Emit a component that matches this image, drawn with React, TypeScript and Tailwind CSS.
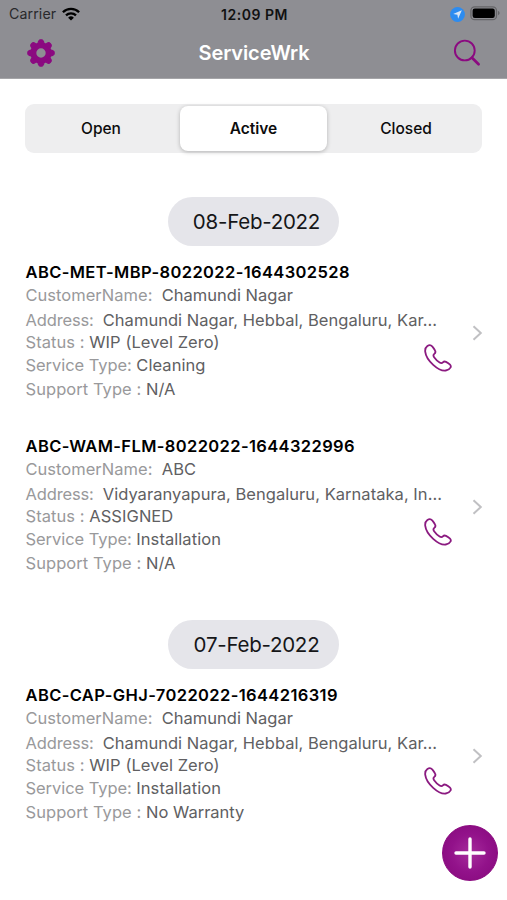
import { useState } from "react";

interface Ticket {
  id: string;
  customer: string;
  address: string;
  status: string;
  serviceType: string;
  supportType: string;
}

const TABS = ["Open", "Active", "Closed"];

const GROUPS: { date: string; tickets: Ticket[] }[] = [
  {
    date: "08-Feb-2022",
    tickets: [
      {
        id: "ABC-MET-MBP-8022022-1644302528",
        customer: "Chamundi Nagar",
        address: "Chamundi Nagar, Hebbal, Bengaluru, Kar...",
        status: "WIP (Level Zero)",
        serviceType: "Cleaning",
        supportType: "N/A",
      },
      {
        id: "ABC-WAM-FLM-8022022-1644322996",
        customer: "ABC",
        address: "Vidyaranyapura, Bengaluru, Karnataka, In...",
        status: "ASSIGNED",
        serviceType: "Installation",
        supportType: "N/A",
      },
    ],
  },
  {
    date: "07-Feb-2022",
    tickets: [
      {
        id: "ABC-CAP-GHJ-7022022-1644216319",
        customer: "Chamundi Nagar",
        address: "Chamundi Nagar, Hebbal, Bengaluru, Kar...",
        status: "WIP (Level Zero)",
        serviceType: "Installation",
        supportType: "No Warranty",
      },
    ],
  },
];

function StatusBar() {
  return (
    <div className="grid h-7 grid-cols-3 items-center pl-[9px] pr-[7px] text-[14px]">
      <div className="flex items-center gap-1.5">
        <span className="text-[14.2px] tracking-[0.1px] text-[#29292b]">Carrier</span>
        <svg width="18" height="14" viewBox="0 0 18 14" fill="none" stroke="#000" strokeWidth="2.3">
          <path d="M.9 5.2a11.5 11.5 0 0 1 16.2 0" />
          <path d="M4 8.4a7.1 7.1 0 0 1 10 0" />
          <path d="M9 13.6 6.1 10.7a4.1 4.1 0 0 1 5.8 0Z" fill="#000" stroke="none" />
        </svg>
      </div>
      <span className="text-center font-semibold tracking-[0.5px] text-[#111]">12:09 PM</span>
      <div className="flex items-center justify-end gap-[5px]">
        <svg width="15" height="15" viewBox="0 0 15 15">
          <circle cx="7.5" cy="7.5" r="7.4" fill="#2d8cf0" />
          <path d="M11.8 3.3 8.1 11.8 7.4 7.8 3.2 7.1Z" fill="#d9e6f5" />
        </svg>
        <svg className="-mt-0.5" width="30" height="15" viewBox="0 0 30 15">
          <rect x=".9" y=".9" width="25.6" height="12.8" rx="3.8" fill="none" stroke="#656568" strokeWidth="1.3" />
          <rect x="2.6" y="2.6" width="22.2" height="9.4" rx="2.2" fill="#000" />
          <path d="M28 5v4.2c1-.4 1.6-1.1 1.6-2.1S29 5.4 28 5Z" fill="#656568" />
        </svg>
      </div>
    </div>
  );
}

function GearIcon() {
  return (
    <svg width="28" height="28" viewBox="-14 -14 28 28" stroke="#8b0a80" fill="none">
      <circle r="7.6" strokeWidth="5.8" />
      {[0, 45, 90, 135, 180, 225, 270, 315].map((a) => (
        <path key={a} d="M-3.4-8.7-2.4-12.2Q-1.9-13.3 0-13.3 1.9-13.3 2.4-12.2L3.4-8.7Z" fill="#8b0a80" strokeWidth="1" strokeLinejoin="round" transform={`rotate(${a})`} />
      ))}
    </svg>
  );
}

function SearchIcon() {
  return (
    <svg width="28" height="28" viewBox="0 0 28 28" fill="none" stroke="#8b0a80" strokeLinecap="round">
      <circle cx="11.8" cy="11.5" r="9.9" strokeWidth="1.9" />
      <path d="m19 18.7 6.6 6.6" strokeWidth="2.7" />
    </svg>
  );
}

function PhoneIcon() {
  return (
    <svg width="28" height="28" viewBox="0 0 28 28" fill="none" stroke="#8b1a80" strokeWidth="1.8" strokeLinejoin="round">
      <path d="M3.4 2C1.7 3.2 1 5.2 1.2 7.6c.5 4.3 3.7 9.3 8 13.2 4.4 4 9 6.2 12.6 5.7 2-.3 3.9-1.3 4.8-3.1.5-1.1.3-1.8-.6-2.7-1.1-1.1-2.5-2-4-2.8-1.2-.6-2.2-.5-3.1.4-.9 1-2 1-3.3.2-2.1-1.3-4-3.2-5.5-5.3-.9-1.3-.9-2.4.2-3.3 1.2-1 1.5-1.9.8-3.2C10.3 5.1 9.3 3.6 8.2 2.4 6.8.8 5.2.8 3.4 2Z" />
    </svg>
  );
}

function TicketRow({ ticket }: { ticket: Ticket }) {
  return (
    <div className="mb-[33.5px] flex h-[140px] pl-[25.5px] pr-[25px] last:mb-0">
      <div className="w-[398px] shrink-0 whitespace-pre text-[16.5px] text-[#606062]">
        <p className="h-[21px] font-semibold leading-[21px] tracking-[0.38px] text-black">{ticket.id}</p>
        <p className="h-[26px] leading-[25px]"><span className="tracking-[0.02px] text-[#99999b]">CustomerName:  </span>{ticket.customer}</p>
        <p className="h-[22px] leading-[23px] tracking-[0.04px]"><span className="tracking-[-0.14px] text-[#99999b]">Address:  </span>{ticket.address}</p>
        <p className="h-[23px] leading-[23px] tracking-[0.06px]"><span className="text-[#99999b]">Status : </span>{ticket.status}</p>
        <p className="h-[23px] leading-[23px] tracking-[0.06px]"><span className="tracking-[-0.06px] text-[#99999b]">Service Type: </span>{ticket.serviceType}</p>
        <p className="h-[25px] leading-[25px]"><span className="tracking-[0.06px] text-[#99999b]">Support Type : </span>{ticket.supportType}</p>
      </div>
      <button className="mt-[82px] h-7 w-7 shrink-0"><PhoneIcon /></button>
      <svg className="ml-5 mt-[63px] shrink-0" width="11" height="16" viewBox="0 0 11 16" fill="none" stroke="#c0c0c3" strokeWidth="2">
        <path d="m1.5 1.2 7.3 6.8-7.3 6.8" />
      </svg>
    </div>
  );
}

export default function App() {
  const [tab, setTab] = useState("Active");

  return (
    <div className="relative h-[900px] w-[507px] overflow-hidden bg-white font-['Inter','Liberation_Sans',sans-serif]">
      <header className="h-[79px] border-b border-[#a5a5a8] bg-[#8e8e93]">
        <StatusBar />
        <div className="flex h-[49px] items-center justify-between pl-[27px] pr-[26px]">
          <GearIcon />
          <h1 className="text-[20px] font-semibold tracking-[-0.1px] text-white">ServiceWrk</h1>
          <SearchIcon />
        </div>
      </header>

      <div className="mx-[25px] mt-[25px] grid h-[49px] grid-cols-[155px_147px_155px] rounded-[9px] bg-[#eeeeef] py-0.5">
        {TABS.map((t) => (
          <button
            key={t}
            onClick={() => setTab(t)}
            className={`text-[15.5px] text-[#0c0c0d] first:pr-[3px] last:pl-[3px] ${t === tab ? "rounded-[8px] bg-white font-semibold shadow-[0_1px_4px_rgba(0,0,0,0.25)]" : "font-medium"}`}
          >
            {t}
          </button>
        ))}
      </div>

      <main className="mt-11">
        {GROUPS.map((g) => (
          <section key={g.date} className="mb-[44.5px]">
            <h2 className="mx-auto mb-4 flex h-[49px] w-[171px] items-center justify-center rounded-full bg-[#e5e5ea] pl-1.5 pt-0.5 text-[20.5px] tracking-[-0.25px] text-[#161618]">{g.date}</h2>
            {g.tickets.map((t) => (
              <TicketRow key={t.id} ticket={t} />
            ))}
          </section>
        ))}
      </main>

      <button className="absolute left-[441.5px] top-[825px] flex h-14 w-14 items-center justify-center rounded-full border border-[#8b0a80] bg-[radial-gradient(circle,#a62c9c_0%,#92128a_50%,#85087b_100%)]">
        <svg width="32" height="32" viewBox="0 0 32 32" stroke="#fff" strokeWidth="3.4" strokeLinecap="round">
          <path d="M16 2v28M2 16h28" />
        </svg>
      </button>
    </div>
  );
}
